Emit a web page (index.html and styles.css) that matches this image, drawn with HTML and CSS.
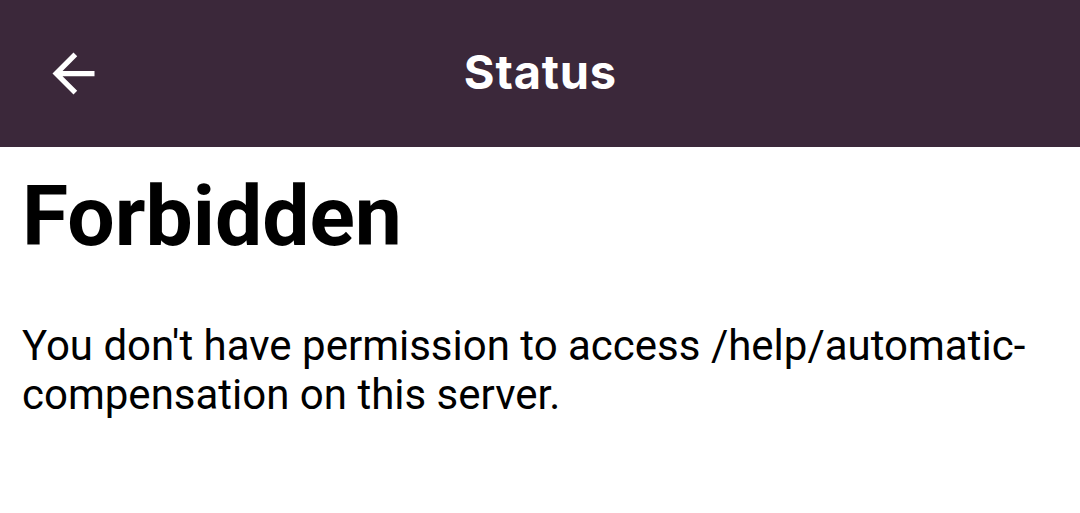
FILE: index.html
```html
<!DOCTYPE html>
<html lang="en">
<head>
<meta charset="utf-8">
<title>Status</title>
<link rel="stylesheet" href="styles.css">
</head>
<body>
<header class="appbar">
  <button class="back" aria-label="Back">
    <svg viewBox="0 0 24 24" width="63" height="63"><path fill="#fff" d="M20 11H7.83l5.59-5.59L12 4l-8 8 8 8 1.41-1.41L7.83 13H20v-2z"/></svg>
  </button>
  <h2 class="title">Status</h2>
  <span class="spacer"></span>
</header>
<main class="content">
  <h1 class="heading">Forbidden</h1>
  <p class="message">You don't have permission to access /help/automatic-compensation on this server.</p>
</main>
</body>
</html>
```
FILE: styles.css
```css
* { box-sizing: border-box; }
html, body { margin: 0; padding: 0; background: #fff; }
body { font-family: Roboto, "Noto Sans", sans-serif; color: #000; width: 1080px; }

.appbar {
  height: 147px;
  background: #3b283a;
  display: grid;
  grid-template-columns: 106px 1fr 106px;
  align-items: center;
}
.back {
  border: 0;
  background: none;
  padding: 0 0 0 42px;
  margin: 0;
  height: 63px;
  display: flex;
  align-items: center;
}
.back svg { display: block; }
.title {
  margin: 0;
  text-align: center;
  color: #fff;
  font-family: Inter, "Open Sans", sans-serif;
  font-weight: 700;
  font-size: 47px;
  letter-spacing: 0.8px;
  padding-left: 0.8px;
  line-height: 1;
  padding-bottom: 4px;
}

.content { padding: 20px 22px 0 22px; }
.heading {
  margin: 0;
  font-size: 84px;
  font-weight: 700;
  line-height: normal;
}
.message {
  margin: 55px 0 0 0;
  font-size: 42px;
  line-height: normal;
  font-weight: 400;
}
```
